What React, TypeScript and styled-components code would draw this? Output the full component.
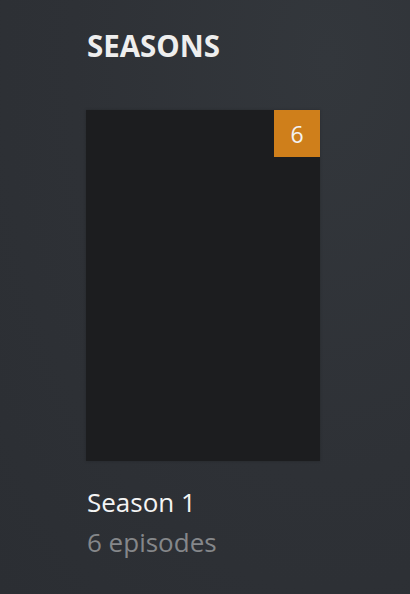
import React from "react";
import styled, { createGlobalStyle } from "styled-components";

const Global = createGlobalStyle`
  html, body { margin: 0; padding: 0; }
  body {
    width: 410px;
    height: 594px;
    overflow: hidden;
    background: radial-gradient(ellipse at 80% 10%, #33373c 0%, #2e3136 55%, #2b2e33 100%);
    font-family: "Open Sans", "Noto Sans", sans-serif;
  }
`;

const Page = styled.div`
  padding: 26px 0 0 86px;
  display: flex;
  flex-direction: column;
`;

const Heading = styled.h2`
  margin: 0;
  font-size: 29.5px;
  line-height: 40px;
  font-weight: 700;
  color: #eeeeee;
  padding-left: 1px;
`;

const Card = styled.div`
  margin-top: 44px;
  width: 234px;
  display: flex;
  flex-direction: column;
`;

const Poster = styled.div`
  position: relative;
  width: 234px;
  height: 351px;
  background: #1c1d1f;
  box-shadow: 0 0 3px rgba(0, 0, 0, 0.2);
`;

const Badge = styled.div`
  position: absolute;
  top: 0;
  right: 0;
  width: 46px;
  height: 47px;
  background: #cf7f1b;
  color: #f3f3f3;
  font-size: 23px;
  display: flex;
  align-items: center;
  justify-content: center;
`;

const Title = styled.div`
  margin-top: 24px;
  padding-left: 1px;
  font-size: 26px;
  line-height: 34px;
  font-weight: 500;
  color: #f4f4f4;
`;

const Sub = styled.div`
  margin-top: 6px;
  padding-left: 1px;
  font-size: 26px;
  line-height: 34px;
  color: #85878a;
`;

export default function App() {
  return (
    <>
      <Global />
      <Page>
        <Heading>SEASONS</Heading>
        <Card>
          <Poster>
            <Badge>6</Badge>
          </Poster>
          <Title>Season 1</Title>
          <Sub>6 episodes</Sub>
        </Card>
      </Page>
    </>
  );
}
